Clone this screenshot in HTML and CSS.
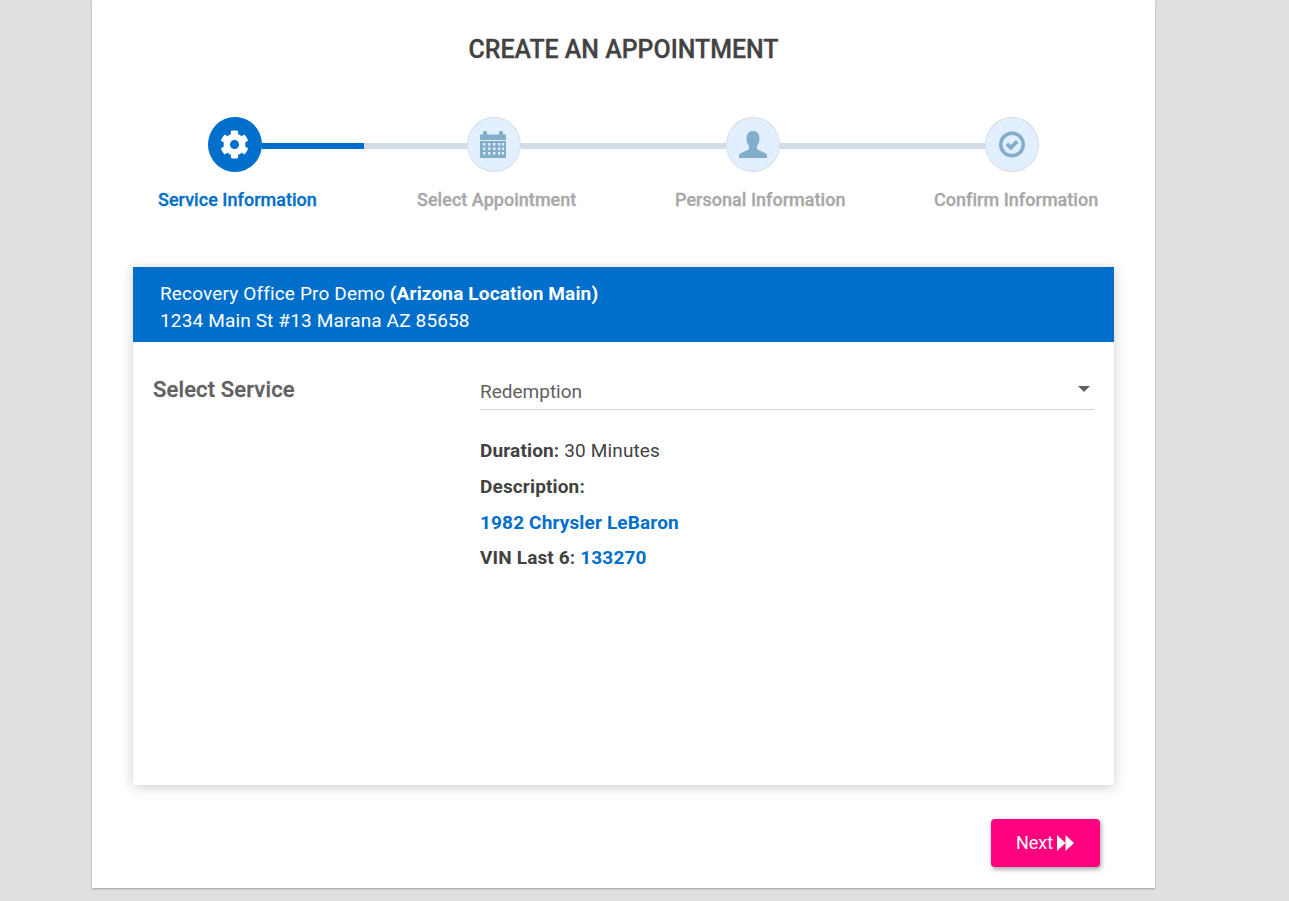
FILE: index.html
```html
<!DOCTYPE html>
<html lang="en">
<head>
<meta charset="utf-8">
<title>Create an Appointment</title>
<link rel="stylesheet" href="styles.css">
</head>
<body>
<main class="sheet">
  <h1 class="title">CREATE AN APPOINTMENT</h1>
  <ol class="stepper">
    <li class="step active">
      <div class="track">
        <span class="bubble">
          <svg class="icon icon-gear" viewBox="0 0 512 512"><path fill-rule="evenodd" d="M487.4 315.7l-42.6-24.6c4.3-23.2 4.3-47 0-70.2l42.6-24.6c4.9-2.8 7.1-8.6 5.5-14-11.1-35.6-30-67.8-54.7-94.6-3.8-4.1-10-5.1-14.8-2.3L380.8 110c-17.9-15.4-38.5-27.3-60.8-35.1V25.8c0-5.6-3.9-10.5-9.4-11.7-36.7-8.2-74.3-7.8-109.2 0-5.5 1.2-9.4 6.1-9.4 11.7V75c-22.2 7.9-42.8 19.8-60.8 35.1L88.7 85.5c-4.9-2.8-11-1.9-14.8 2.3-24.7 26.7-43.6 58.9-54.7 94.6-1.7 5.4.6 11.2 5.5 14L67.3 221c-4.3 23.2-4.3 47 0 70.2l-42.6 24.6c-4.9 2.8-7.1 8.6-5.5 14 11.1 35.6 30 67.8 54.7 94.6 3.8 4.1 10 5.1 14.8 2.3l42.6-24.6c17.9 15.4 38.5 27.3 60.8 35.1v49.2c0 5.6 3.9 10.5 9.4 11.7 36.7 8.2 74.3 7.8 109.2 0 5.5-1.2 9.4-6.1 9.4-11.7v-49.2c22.2-7.9 42.8-19.8 60.8-35.1l42.6 24.6c4.9 2.8 11 1.9 14.8-2.3 24.7-26.7 43.6-58.9 54.7-94.6 1.5-5.5-.7-11.3-5.6-14.1zM256 336c-44.1 0-80-35.9-80-80s35.9-80 80-80 80 35.9 80 80-35.9 80-80 80z"/></svg>
        </span>
        <span class="connector"><span class="connector-fill"></span></span>
      </div>
      <span class="step-label">Service Information</span>
    </li>
    <li class="step">
      <div class="track">
        <span class="bubble">
          <svg class="icon icon-calendar" viewBox="0 0 26 27"><path fill-rule="evenodd" d="M0 3.500h3V1.600C3 .7 3.700 0 4.600 0h.8C6.300 0 7 .7 7 1.600V3.500h12V1.600C19 .7 19.700 0 20.600 0h.8C22.300 0 23 .7 23 1.600V3.500h3V9H0zM0 10h26v17H0zM3 12v2.400h2.400V12zM8 12v2.400h2.400V12zM13 12v2.400h2.400V12zM18 12v2.400h2.400V12zM22 12v2.400h2V12zM3 16.500v2.400h2.400v-2.400zM8 16.500v2.400h2.400v-2.400zM13 16.500v2.400h2.400v-2.400zM18 16.500v2.400h2.400v-2.400zM22 16.500v2.400h2v-2.400zM3 21v2.400h2.400V21zM8 21v2.400h2.400V21zM13 21v2.400h2.400V21zM18 21v2.400h2.400V21zM22 21v2.400h2V21z"/></svg>
        </span>
        <span class="connector"></span>
      </div>
      <span class="step-label">Select Appointment</span>
    </li>
    <li class="step">
      <div class="track">
        <span class="bubble">
          <svg class="icon icon-wide" viewBox="0 0 28 27"><path d="M14 0c4 0 6.500 3 6.500 7.500 0 3-.9 5.500-2.500 7.300v2.400c0 1 .5 1.500 1.500 1.900l6.500 2.900c1.300.6 2 1.600 2 3V27H0v-2c0-1.400.7-2.400 2-3l6.500-2.900c1-.4 1.500-.9 1.500-1.900v-2.400C8.400 13 7.500 10.500 7.500 7.500 7.500 3 10 0 14 0z"/></svg>
        </span>
        <span class="connector"></span>
      </div>
      <span class="step-label">Personal Information</span>
    </li>
    <li class="step">
      <div class="track">
        <span class="bubble">
          <svg class="icon" viewBox="0 0 26 27"><path fill-rule="evenodd" d="M13 .5a13 13 0 1 1 0 26 13 13 0 0 1 0-26zM13 4a9.500 9.500 0 1 0 0 19 9.500 9.500 0 0 0 0-19z"/><path d="M6.500 14.200l2.800-2.800 2.500 2.500 5-5 2.800 2.800-7.800 7.800z"/></svg>
        </span>
      </div>
      <span class="step-label">Confirm Information</span>
    </li>
  </ol>

  <section class="card">
    <header class="card-head">
      <div>Recovery Office Pro Demo <strong>(Arizona Location Main)</strong></div>
      <div>1234 Main St #13 Marana AZ 85658</div>
    </header>
    <div class="card-body">
      <h2 class="field-name">Select Service</h2>
      <div class="field">
        <div class="select">
          <span>Redemption</span>
          <span class="caret"></span>
        </div>
        <p class="detail"><strong>Duration:</strong> 30 Minutes</p>
        <p class="detail"><strong>Description:</strong></p>
        <p class="detail link"><strong>1982 Chrysler LeBaron</strong></p>
        <p class="detail"><strong>VIN Last 6: <span class="link">133270</span></strong></p>
      </div>
    </div>
  </section>

  <footer class="actions">
    <button class="next" type="button">Next
      <svg class="next-icon" viewBox="0 0 17 16"><path d="M0 0l8.500 8L0 16zM8.500 0L17 8l-8.500 8z"/></svg>
    </button>
  </footer>
</main>
</body>
</html>
```
FILE: styles.css
```css
* { box-sizing: border-box; }
html, body { margin: 0; padding: 0; }
body {
  height: 901px;
  overflow: hidden;
  background: #e0e0e0;
  font-family: Roboto, "Liberation Sans", sans-serif;
  color: #424242;
}
.sheet {
  width: 1063px;
  height: 888px;
  margin-left: 92px;
  background: #fff;
  box-shadow: 0 1px 2px rgba(0, 0, 0, .3);
  padding-top: 35px;
}
.title {
  margin: 0;
  height: 28px;
  line-height: 29px;
  text-align: center;
  font-size: 24.900px;
  font-weight: 500;
  color: #424242;
  -webkit-text-stroke: .3px #424242;
}
.stepper {
  list-style: none;
  margin: 54px 0 0 66px;
  padding: 0;
  display: grid;
  grid-template-columns: repeat(3, 259px) 170px;
}
.step { display: flex; flex-direction: column; }
.track { display: flex; height: 55px; padding-left: 50px; margin-right: -50px; }
.bubble {
  flex: none;
  width: 54px;
  height: 55px;
  border-radius: 50%;
  background: #e1effe;
  border: 1px solid #d7dde3;
  display: flex;
  align-items: center;
  justify-content: center;
  fill: #82adcb;
}
.active .bubble { background: #006fcb; border-color: #006fcb; fill: #fff; }
.icon { width: 26px; height: 27px; display: block; }
.icon-wide { width: 28px; }
.icon-gear { width: 29px; height: 29px; margin-right: 1px; }
.icon-calendar { margin-right: 2px; }
.connector {
  flex: 1;
  height: 6px;
  margin-top: 26px;
  background: #d0dce6;
  display: block;
}
.connector-fill { display: block; width: 102px; height: 100%; background: #006fcb; }
.step-label {
  margin-top: 17px;
  font-size: 18px;
  line-height: 22px;
  font-weight: 500;
  letter-spacing: .03px;
  color: #a8a8a8;
  white-space: nowrap;
  -webkit-text-stroke: .3px currentColor;
}
.step:nth-child(n+3) .step-label { margin-left: -1px; }
.active .step-label { color: #006fcb; }
.card {
  width: 981px;
  height: 518px;
  margin: 56px 0 0 41px;
  background: #fff;
  box-shadow: 0 2px 12px rgba(0, 0, 0, .2);
}
.card-head {
  height: 75px;
  padding: 13px 27px 0;
  background: #006fcb;
  color: #fff;
  font-size: 19px;
  letter-spacing: .15px;
  line-height: 27px;
}
.card-head strong { font-weight: 700; }
.card-body { display: flex; padding: 33px 20px 0; }
.field-name {
  flex: none;
  width: 327px;
  margin: 0;
  font-size: 22px;
  letter-spacing: .15px;
  line-height: 30px;
  font-weight: 500;
  color: #616161;
  -webkit-text-stroke: .3px #616161;
}
.field { flex: 1; }
.select {
  display: flex;
  align-items: center;
  justify-content: space-between;
  height: 35px;
  border-bottom: 1px solid #d2d2d2;
  font-size: 19px;
  color: #616161;
  padding-bottom: 2px;
}
.caret {
  width: 0;
  height: 0;
  margin: -4px 4px 0 0;
  border-left: 6px solid transparent;
  border-right: 6px solid transparent;
  border-top: 6px solid #616161;
}
.detail { margin: 0; font-size: 19px; letter-spacing: .15px; line-height: 36px; color: #424242; }
.select + .detail { margin-top: 23px; }
.detail:last-child { margin-top: -1px; }
.detail strong { font-weight: 700; }
.link { color: #006fcb; }
.actions { display: flex; justify-content: flex-end; padding: 34px 55px 0 0; }
.next {
  width: 109px;
  height: 48px;
  border: 0;
  border-radius: 4px;
  background: #ff007f;
  color: #fff;
  font: 400 18px Roboto, "Liberation Sans", sans-serif;
  box-shadow: 1px 2px 5px rgba(0, 0, 0, .4);
  display: flex;
  align-items: center;
  justify-content: center;
  gap: 4px;
  padding: 0 1px 2px 0;
}
.next-icon { width: 17px; height: 16px; fill: #fff; margin-top: 2px; }
```
